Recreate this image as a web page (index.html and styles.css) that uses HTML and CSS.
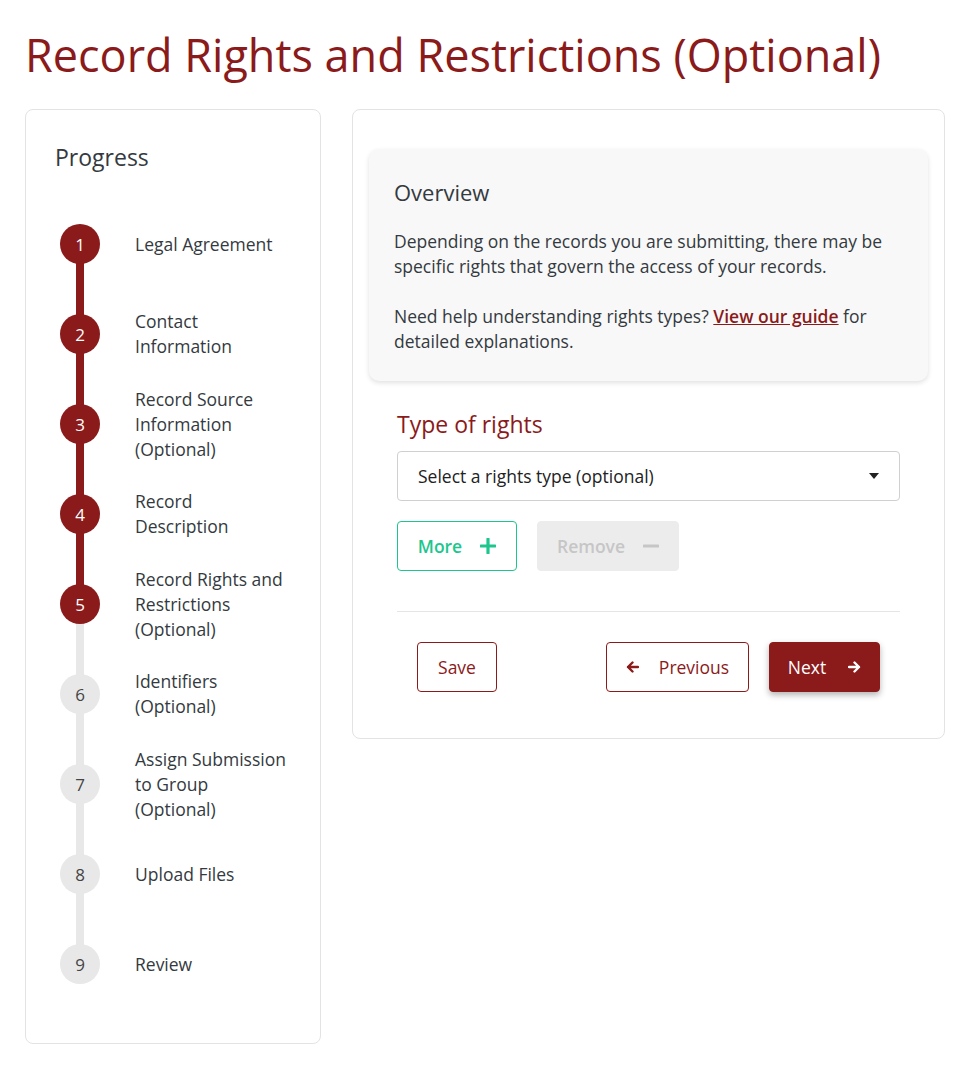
FILE: index.html
```html
<!DOCTYPE html>
<html lang="en">
<head>
<meta charset="utf-8">
<title>Record Rights and Restrictions (Optional)</title>
<link rel="stylesheet" href="styles.css">
</head>
<body>
<main class="page">
  <h1 class="page-title">Record Rights and Restrictions (Optional)</h1>
  <div class="layout">
    <aside class="card progress-card">
      <h2 class="progress-title">Progress</h2>
      <ol class="steps">
        <li class="step done"><span class="bubble">1</span><span class="label">Legal Agreement</span></li>
        <li class="step done"><span class="bubble">2</span><span class="label">Contact<br>Information</span></li>
        <li class="step done"><span class="bubble">3</span><span class="label">Record Source<br>Information<br>(Optional)</span></li>
        <li class="step done"><span class="bubble">4</span><span class="label">Record<br>Description</span></li>
        <li class="step current"><span class="bubble">5</span><span class="label">Record Rights and<br>Restrictions<br>(Optional)</span></li>
        <li class="step"><span class="bubble">6</span><span class="label">Identifiers<br>(Optional)</span></li>
        <li class="step"><span class="bubble">7</span><span class="label">Assign Submission<br>to Group<br>(Optional)</span></li>
        <li class="step"><span class="bubble">8</span><span class="label">Upload Files</span></li>
        <li class="step last"><span class="bubble">9</span><span class="label">Review</span></li>
      </ol>
    </aside>
    <section class="card form-card">
      <div class="overview">
        <h2 class="overview-title">Overview</h2>
        <p>Depending on the records you are submitting, there may be specific rights that govern the access of your records.</p>
        <p>Need help understanding rights types? <a href="#" class="guide-link">View our guide</a> for detailed explanations.</p>
      </div>
      <div class="form-body">
        <h3 class="field-title">Type of rights</h3>
        <div class="select">
          <span>Select a rights type (optional)</span>
          <svg class="caret" width="10" height="6" viewBox="0 0 10 6"><path d="M0 0h10L5 6z" fill="#222"/></svg>
        </div>
        <div class="row-actions">
          <button class="btn btn-more">More
            <svg width="16" height="16" viewBox="0 0 16 16"><path d="M8 1v14M1 8h14" stroke="currentColor" stroke-width="3.2" stroke-linecap="round"/></svg>
          </button>
          <button class="btn btn-remove" disabled>Remove
            <svg width="16" height="16" viewBox="0 0 16 16"><path d="M1 8h14" stroke="currentColor" stroke-width="3.2" stroke-linecap="round"/></svg>
          </button>
        </div>
        <hr class="divider">
        <div class="nav-row">
          <button class="btn btn-outline btn-save">Save</button>
          <div class="nav-right">
            <button class="btn btn-outline btn-prev">
              <svg width="13" height="12" viewBox="0 0 13 12"><path d="M12 6H2M6.5 1.5 2 6l4.5 4.5" fill="none" stroke="currentColor" stroke-width="2.4" stroke-linecap="round" stroke-linejoin="round"/></svg>
              Previous</button>
            <button class="btn btn-primary">Next
              <svg width="13" height="12" viewBox="0 0 13 12"><path d="M1 6h10M6.5 1.5 11 6l-4.5 4.5" fill="none" stroke="currentColor" stroke-width="2.4" stroke-linecap="round" stroke-linejoin="round"/></svg>
            </button>
          </div>
        </div>
      </div>
    </section>
  </div>
</main>
</body>
</html>
```
FILE: styles.css
```css
* { box-sizing: border-box; }
body {
  margin: 0;
  background: #fff;
  font-family: "Open Sans", "Noto Sans", Arial, sans-serif;
  color: #343a40;
}
.page { padding: 0 26px 0 25px; }
.page-title {
  margin: 0;
  padding: 27px 0 27px;
  font-size: 45px;
  line-height: 55px;
  font-weight: 400;
  color: #8b1a1a;
}
.layout {
  display: grid;
  grid-template-columns: 296px 1fr;
  gap: 31px;
  align-items: start;
}
.card {
  border: 1px solid #e3e3e3;
  border-radius: 8px;
  background: #fff;
}
.progress-card { padding: 32px 16px 34px 29px; }
.progress-title {
  margin: 0 0 27px;
  font-size: 23px;
  line-height: 30px;
  font-weight: 400;
}
.steps { list-style: none; margin: 0; padding: 0 0 0 5px; }
.step {
  position: relative;
  height: 90px;
  display: flex;
  align-items: center;
  gap: 35px;
}
.step::after {
  content: "";
  position: absolute;
  left: 16px;
  top: 45px;
  width: 8px;
  height: 90px;
  background: #e8e8e8;
  z-index: 0;
}
.step.done::after { background: #8b1a1a; }
.step.last::after { display: none; }
.bubble {
  position: relative;
  z-index: 1;
  flex: none;
  width: 40px;
  height: 40px;
  border-radius: 50%;
  background: #e8e8e8;
  color: #444;
  display: flex;
  align-items: center;
  justify-content: center;
  font-size: 17px;
}
.step.done .bubble, .step.current .bubble { background: #8b1a1a; color: #fff; }
.label { font-size: 17.5px; line-height: 25px; color: #343a40; }

.form-card { padding: 39px 16px 46px; }
.overview {
  background: #f8f8f8;
  border-radius: 10px;
  box-shadow: 0 2px 5px rgba(0,0,0,0.12);
  padding: 28px 25px 27px;
}
.overview-title {
  margin: 0 0 22px;
  font-size: 22px;
  line-height: 30px;
  font-weight: 400;
}
.overview p { margin: 0; font-size: 17.5px; line-height: 25px; }
.overview p + p { margin-top: 25px; }
.guide-link { color: #8b1a1a; font-weight: 600; text-decoration: underline; }

.form-body { padding: 27px 28px 0; }
.field-title {
  margin: 0 0 11px;
  font-size: 23px;
  line-height: 32px;
  font-weight: 400;
  color: #8b1a1a;
}
.select {
  height: 50px;
  border: 1px solid #d0d0d0;
  border-radius: 4px;
  display: flex;
  align-items: center;
  justify-content: space-between;
  padding: 0 20px 0 20px;
  font-size: 17.5px;
  color: #222;
}
.row-actions { display: flex; gap: 20px; margin-top: 20px; }
.btn {
  height: 50px;
  border-radius: 4px;
  font-family: inherit;
  font-size: 17.5px;
  display: inline-flex;
  align-items: center;
  justify-content: center;
  gap: 18px;
  background: #fff;
  cursor: pointer;
  padding: 0;
}
.btn-more {
  width: 120px;
  border: 1px solid #1ec68d;
  color: #1ec68d;
  font-weight: 600;
}
.btn-remove {
  width: 142px;
  border: 1px solid #ececec;
  background: #ececec;
  color: #c6c6c6;
  font-weight: 600;
}
.divider { border: 0; border-top: 1px solid #e5e5e5; margin: 40px 0 30px; }
.nav-row { display: flex; justify-content: space-between; padding: 0 20px; }
.nav-right { display: flex; gap: 20px; }
.btn-outline { border: 1px solid #8b1a1a; color: #8b1a1a; }
.btn-save { width: 80px; }
.btn-prev { width: 143px; gap: 20px; }
.btn-primary {
  width: 111px;
  border: 1px solid #8b1a1a;
  background: #8b1a1a;
  color: #fff;
  box-shadow: 0 3px 6px rgba(0,0,0,0.3);
  gap: 22px;
}
```
